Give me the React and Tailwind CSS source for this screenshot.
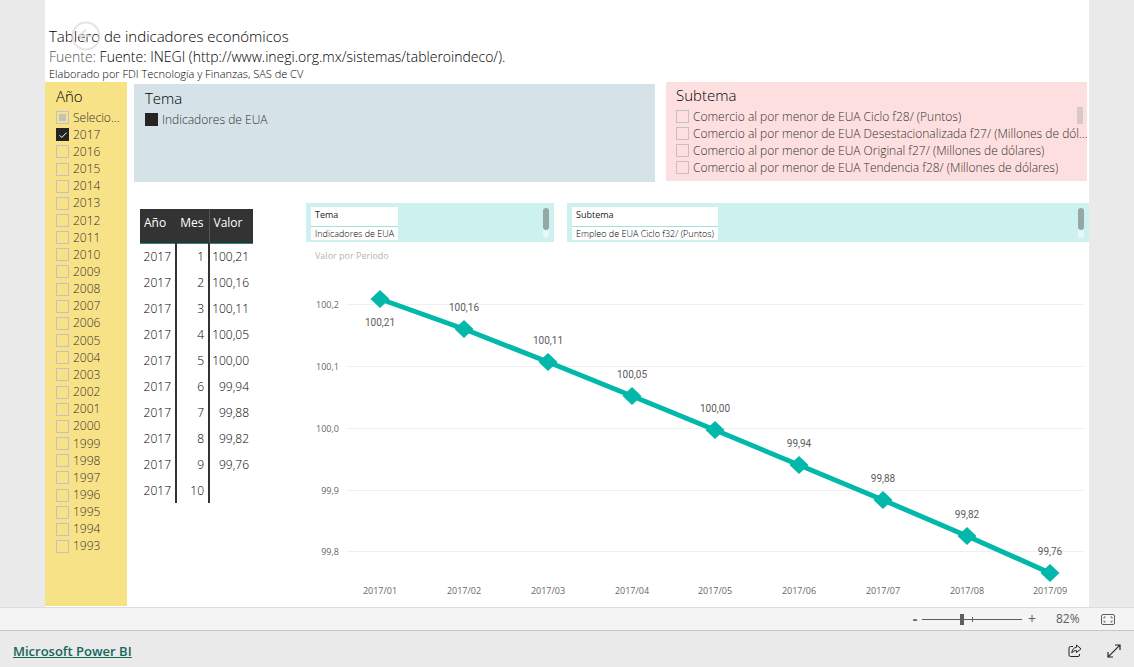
import React from "react";

const years = Array.from({ length: 25 }, (_, i) => String(2017 - i));

const subtopics = [
  "Comercio al por menor de EUA Ciclo f28/ (Puntos)",
  "Comercio al por menor de EUA Desestacionalizada f27/ (Millones de dólares)",
  "Comercio al por menor de EUA Original f27/ (Millones de dólares)",
  "Comercio al por menor de EUA Tendencia f28/ (Millones de dólares)",
];

const values = ["100,21", "100,16", "100,11", "100,05", "100,00", "99,94", "99,88", "99,82", "99,76", ""];

const points = [
  { x: 74, y: 51, label: "100,21", below: true },
  { x: 158, y: 81, label: "100,16" },
  { x: 242, y: 114, label: "100,11" },
  { x: 326, y: 148, label: "100,05" },
  { x: 409, y: 182, label: "100,00" },
  { x: 493, y: 217, label: "99,94" },
  { x: 577, y: 252, label: "99,88" },
  { x: 661, y: 288, label: "99,82" },
  { x: 744, y: 325, label: "99,76" },
];

const gridLines = [
  { y: 56, label: "100,2" },
  { y: 118, label: "100,1" },
  { y: 180, label: "100,0" },
  { y: 242, label: "99,9" },
  { y: 303, label: "99,8" },
];

function Check({ label, state = "off", className = "" }) {
  return (
    <label className={`flex min-w-0 items-center text-xs font-light leading-4 text-[#33312f] ${className}`}>
      <span className="mr-1 grid size-[13px] shrink-0 place-items-center">
        <input
          type="checkbox"
          defaultChecked={state === "on" || state === "full"}
          className="col-start-1 row-start-1 size-[13px] appearance-none border border-[#c2c2c4] checked:border-[#252423] checked:bg-[#252423]"
        />
        {state === "on" && (
          <svg viewBox="0 0 12 12" className="pointer-events-none col-start-1 row-start-1 size-3" fill="none" stroke="#fff">
            <path d="M2.5 6.2 4.8 8.5 9.6 3.6" />
          </svg>
        )}
        {state === "mixed" && <span className="pointer-events-none col-start-1 row-start-1 size-[7px] bg-[#c2c2c4]" />}
      </span>
      <span className="truncate">{label}</span>
    </label>
  );
}

function MiniTable({ heading, value, className }) {
  return (
    <div className={`flex h-[39px] items-start justify-between overflow-hidden bg-[#cdf1ee] px-[5px] py-1 ${className}`}>
      <table className="bg-white text-[9px] text-[#252423]">
        <thead>
          <tr>
            <th className="h-[19px] border-b border-[#9fe3dc] px-1 text-left align-top font-normal leading-4">{heading}</th>
          </tr>
        </thead>
        <tbody>
          <tr>
            <td className="whitespace-nowrap px-1 pt-px font-light leading-3 text-black">{value}</td>
          </tr>
        </tbody>
      </table>
      <div className="mt-px h-[30px] w-1.5 rounded-full bg-[#e6f8f6]">
        <div className="h-[22px] rounded-full bg-[#96a8a6]" />
      </div>
    </div>
  );
}

function Chart() {
  return (
    <svg viewBox="0 0 783 358" className="w-full" role="img" aria-label="Valor por Periodo">
      {gridLines.map((g) => (
        <g key={g.label}>
          <line x1="41" x2="778" y1={g.y + 0.5} y2={g.y + 0.5} stroke="#efefef" />
          <text x="33" y={g.y + 4} textAnchor="end" fontSize="9" fill="#666666">
            {g.label}
          </text>
        </g>
      ))}
      <polyline points={points.map((p) => `${p.x},${p.y}`).join(" ")} fill="none" stroke="#01b8aa" strokeWidth="5" strokeLinejoin="round" />
      {points.map((p, i) => (
        <g key={p.label}>
          <path d={`M${p.x} ${p.y - 9}l9.500 9-9.500 9-9.500-9z`} fill="#01b8aa" />
          <text x={p.x} y={p.below ? p.y + 27 : p.y - 18} textAnchor="middle" fontSize="10" className="font-['Roboto',sans-serif]" fill="#5c5c5c">
            {p.label}
          </text>
          <text x={p.x} y="346" textAnchor="middle" fontSize="9" fill="#666666">
            {`2017/0${i + 1}`}
          </text>
        </g>
      ))}
    </svg>
  );
}

export default function App() {
  return (
    <div className="flex min-h-screen flex-col bg-[#eaeaea] font-['Open_Sans','Noto_Sans',sans-serif] text-[#252423]">
      <main className="mx-[45px] flex flex-1 flex-col bg-white pb-px">
        <header className="relative px-1 pt-[25px]">
          <h1 className="text-[15px] font-light leading-[23px] text-black">Tablero de indicadores económicos</h1>
          <p className="text-sm font-light leading-[18px] text-black">
            <span className="text-[#555555]">Fuente: </span>Fuente: INEGI (http://www.inegi.org.mx/sistemas/tableroindeco/).
          </p>
          <p className="text-[11px] font-light leading-4 text-black">Elaborado por FDI Tecnología y Finanzas, SAS de CV</p>
          <button type="button" aria-label="Atrás" className="absolute left-[26px] top-[21px] opacity-80">
            <svg viewBox="0 0 30 30" className="size-[30px]" fill="none" stroke="#dedede" strokeWidth="2">
              <circle cx="15" cy="15" r="13.500" />
              <path d="M22 15H9M15 8.500 8.500 15 15 21.500" />
            </svg>
          </button>
        </header>

        <div className="flex flex-1 items-stretch">
          <section className="w-[82px] shrink-0 bg-[#f8e287] pl-[11px] pr-1.5">
            <h2 className="pb-px pt-0.5 text-[15px] font-light leading-6 text-black">Año</h2>
            <div className="flex h-[446px] flex-col">
              <Check label="Selecionar tudo" state="mixed" className="flex-1" />
              {years.map((y) => (
                <Check key={y} label={y} state={y === "2017" ? "on" : "off"} className="flex-1" />
              ))}
            </div>
          </section>

          <div className="min-w-0 flex-1">
            <div className="flex items-start">
              <section className="ml-[7px] mt-0.5 h-[98px] min-w-0 flex-[499] bg-[#d5e3e8] px-[11px]">
                <h2 className="pt-[3px] text-[15px] font-light leading-[23px] text-black">Tema</h2>
                <Check label="Indicadores de EUA" state="full" className="h-[19px]" />
              </section>
              <section className="ml-[11px] mr-0.5 flex h-[99px] min-w-0 flex-[411] justify-between bg-[#fddfdf] pl-[10px]">
                <div className="min-w-0 flex-1">
                  <h2 className="pb-px pt-0.5 text-[15px] font-light leading-[23px] text-black">Subtema</h2>
                  <div className="-mr-1.5 flex flex-col">
                    {subtopics.map((s) => (
                      <Check key={s} label={s} className="h-[17px]" />
                    ))}
                  </div>
                </div>
                <div className="-ml-1.5 mr-1 mt-[25px] h-[17px] w-1.5 shrink-0 bg-[#d8c8c8]" />
              </section>
            </div>

            <div className="mt-[21px] flex items-start">
              <table className="ml-[13px] mt-1.5 w-[113px] shrink-0 table-fixed text-xs">
                <thead>
                  <tr className="h-[34px] border-b border-[#1f8a80] bg-[#333333] text-left align-top leading-[28px] text-white">
                    <th className="w-9 pl-1 font-medium">Año</th>
                    <th className="w-[33px] border-r border-[#555555] pr-[5px] text-right font-medium">Mes</th>
                    <th className="pl-1 font-medium">Valor</th>
                  </tr>
                </thead>
                <tbody className="text-right font-light text-black">
                  {values.map((v, i) => (
                    <tr key={i} className="h-[26px]">
                      <td className="border-r-2 border-[#333333] pr-1 pt-0.5">2017</td>
                      <td className="border-r-2 border-[#333333] pr-1 pt-0.5">{i + 1}</td>
                      <td className="pr-1 pt-0.5">{v}</td>
                    </tr>
                  ))}
                </tbody>
              </table>

              <div className="ml-[53px] min-w-0 flex-1">
                <div className="flex">
                  <MiniTable heading="Tema" value="Indicadores de EUA" className="flex-[238]" />
                  <MiniTable heading="Subtema" value="Empleo de EUA Ciclo f32/ (Puntos)" className="ml-[13px] flex-[512]" />
                </div>
                <h2 className="mt-1.5 pl-[9px] text-[9px] leading-4 text-[#b5b5b5]">Valor por Periodo</h2>
                <div className="-mt-4">
                  <Chart />
                </div>
              </div>
            </div>
          </div>
        </div>
      </main>

      <div className="flex h-6 items-center justify-end border-y border-t-[#dddddd] border-b-[#c8c8c8] bg-[#f4f4f4] pr-[19px] text-[#605e5c]">
        <button type="button" aria-label="Alejar" className="w-2 text-sm font-bold leading-4">-</button>
        <div className="relative ml-[3px] flex h-4 w-[100px] items-center">
          <input
            type="range"
            min="0"
            max="100"
            defaultValue="40"
            aria-label="Zoom"
            className="h-px w-full appearance-none bg-[#605e5c] [&::-webkit-slider-thumb]:h-[11px] [&::-webkit-slider-thumb]:w-1 [&::-webkit-slider-thumb]:appearance-none [&::-webkit-slider-thumb]:bg-[#605e5c]"
          />
          <span className="pointer-events-none absolute left-1/2 h-[5px] w-px bg-[#605e5c]" />
        </div>
        <button type="button" aria-label="Acercar" className="ml-1.5 w-2 text-sm leading-4">+</button>
        <span className="ml-5 w-6 text-xs leading-4">82%</span>
        <button type="button" aria-label="Ajustar a la página" className="ml-[21px]">
          <svg viewBox="0 0 14 11" className="h-[11px] w-3.5" fill="none" stroke="#605e5c">
            <rect x="0.500" y="0.500" width="13" height="10" rx="1.500" />
            <path d="M3 4.500V3h1.500M9.500 3H11v1.500M11 6.500V8H9.500M4.500 8H3V6.500" />
          </svg>
        </button>
      </div>

      <footer className="flex h-9 items-center pb-1 pl-[13px] pr-[13px] pt-2">
        <a href="https://powerbi.microsoft.com" className="text-[13px] font-semibold leading-5 text-[#14665c] underline">
          Microsoft Power BI
        </a>
        <button type="button" aria-label="Compartir" className="ml-auto">
          <svg viewBox="0 0 14 14" className="size-3.5" fill="none" stroke="#252423">
            <path d="M5 2.500H2.500a1.500 1.500 0 0 0-1.500 1.500v7A1.500 1.500 0 0 0 2.500 12.500h7.500a1.500 1.500 0 0 0 1.500-1.500V10" />
            <path d="M8.500 1 13 4.800 8.500 8.500V6.600C6.500 6.500 5 7.200 3.800 9 4 6 5.500 3.700 8.500 3.300z" />
          </svg>
        </button>
        <button type="button" aria-label="Pantalla completa" className="ml-[25px]">
          <svg viewBox="0 0 14 14" className="size-3.5" fill="none" stroke="#252423" strokeWidth="1.200">
            <path d="M1.200 12.800 12.800 1.200M8 1h5v5M1 8v5h5" />
          </svg>
        </button>
      </footer>
    </div>
  );
}
